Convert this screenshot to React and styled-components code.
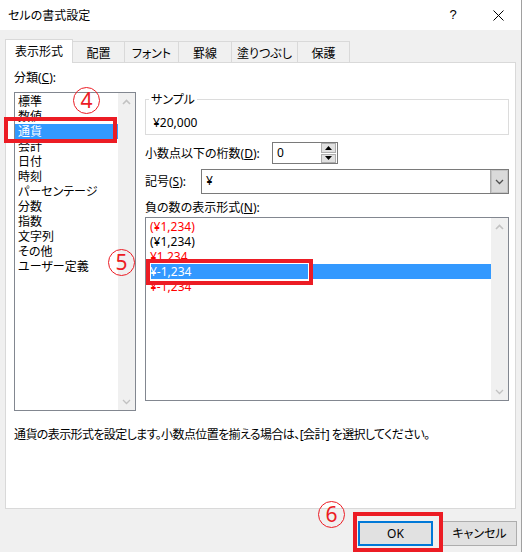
import React from 'react';
import styled, { createGlobalStyle } from 'styled-components';

const Global = createGlobalStyle`
  html, body { margin: 0; padding: 0; background: #fff; }
  body {
    font-family: "Noto Sans", "Noto Sans CJK JP", sans-serif;
    font-size: 12px;
    color: #000;
    font-feature-settings: "palt";
  }
  * { box-sizing: border-box; }
`;

const RED = '#ec1c24';

const Window = styled.div`
  position: relative;
  width: 522px;
  height: 552px;
  background: #f0f0f0;
  border-right: 1px solid #a0a0a0;
  display: flex;
  flex-direction: column;
  overflow: hidden;
`;

const TitleBar = styled.div`
  height: 30px;
  flex: none;
  background: #fff;
  display: flex;
  align-items: center;
  padding-left: 8px;
`;

const Title = styled.div`
  flex: 1;
  font-size: 12px;
  line-height: 16px;
  padding-top: 1px;
`;

const HelpButton = styled.div`
  width: 14px;
  text-align: center;
  font-size: 13px;
  line-height: 16px;
  font-family: "Liberation Sans", sans-serif;
`;

const CloseButton = styled.div`
  width: 46px;
  height: 30px;
  margin-left: 15px;
  display: flex;
  align-items: center;
  justify-content: center;
`;

const TabRow = styled.div`
  display: flex;
  align-items: flex-end;
  height: 23px;
  margin: 9px 0 0 5px;
  position: relative;
  z-index: 1;
`;

const Tab = styled.div`
  width: ${p => p.$w}px;
  height: ${p => (p.$active ? 24 : 21)}px;
  margin-bottom: ${p => (p.$active ? -1 : 0)}px;
  margin-left: ${p => (p.$first ? 0 : -1)}px;
  background: ${p => (p.$active ? '#fff' : '#f0f0f0')};
  border: 1px solid #d9d9d9;
  border-bottom: none;
  display: flex;
  align-items: center;
  justify-content: center;
  font-size: 12px;
  line-height: 15px;
  padding-top: ${p => (p.$active ? 0 : 2)}px;
`;

const Panel = styled.div`
  margin-left: 5px;
  width: 511px;
  height: 447px;
  flex: none;
  background: #fff;
  border: 1px solid #d9d9d9;
  display: flex;
  flex-direction: column;
`;

const TopRow = styled.div`
  display: flex;
  padding-left: 8px;
`;

const LeftCol = styled.div`
  width: 122px;
  display: flex;
  flex-direction: column;
`;

const RightCol = styled.div`
  width: 364px;
  margin-left: 9px;
  display: flex;
  flex-direction: column;
`;

const FieldLabel = styled.div`
  line-height: 15px;
  height: 15px;
  margin-top: ${p => p.$mt || 0}px;
  white-space: nowrap;
  u { text-decoration: underline; text-underline-offset: 1px; }
`;

const ListBox = styled.div`
  height: ${p => p.$h}px;
  margin-top: ${p => p.$mt}px;
  border: 1px solid #828790;
  background: #fff;
  display: flex;
`;

const ListItems = styled.div`
  flex: 1;
  padding-top: 1px;
  display: flex;
  flex-direction: column;
`;

const ListItem = styled.div`
  height: 15px;
  line-height: 15px;
  padding-left: ${p => p.$pl}px;
  white-space: nowrap;
  color: ${p => (p.$sel ? '#fff' : p.$red ? '#ff0000' : '#000')};
  background: ${p => (p.$sel ? '#3399ff' : 'transparent')};
`;

const ScrollBar = styled.div`
  width: 17px;
  background: #f0f0f0;
  display: flex;
  flex-direction: column;
  justify-content: space-between;
`;

const ScrollArrow = styled.div`
  height: 17px;
  display: flex;
  align-items: center;
  justify-content: center;
`;

const Group = styled.div`
  margin-top: 36px;
  height: 36px;
  border: 1px solid #dcdcdc;
  padding-left: 7px;
`;

const Legend = styled.div`
  width: fit-content;
  margin-top: -8px;
  margin-left: -4px;
  padding: 0 2px;
  background: #fff;
  line-height: 15px;
`;

const SampleValue = styled.div`
  margin-top: 8px;
  line-height: 15px;
`;

const FormRow = styled.div`
  display: flex;
  align-items: center;
  height: ${p => p.$h}px;
  margin-top: ${p => p.$mt}px;
`;

const RowLabel = styled.div`
  width: ${p => p.$w}px;
  flex: none;
  line-height: 15px;
  white-space: nowrap;
  u { text-decoration: underline; text-underline-offset: 1px; }
`;

const SpinBox = styled.div`
  width: 66px;
  height: 22px;
  border: 1px solid #7a7a7a;
  background: #fff;
  display: flex;
`;

const SpinValue = styled.div`
  flex: 1;
  padding-left: 4px;
  line-height: 19px;
`;

const SpinButtons = styled.div`
  width: 15px;
  margin: 0 1px 0 0;
  display: flex;
  flex-direction: column;
  gap: 1px;
`;

const SpinButton = styled.div`
  flex: 1;
  border: 1px solid #adadad;
  background: #e1e1e1;
  display: flex;
  align-items: center;
  justify-content: center;
`;

const Combo = styled.div`
  flex: 1;
  height: 25px;
  border: 1px solid #7a7a7a;
  background: #fff;
  display: flex;
`;

const ComboValue = styled.div`
  flex: 1;
  padding-left: 4px;
  line-height: 22px;
`;

const ComboButton = styled.div`
  width: 18px;
  background: #dadada;
  border-left: 1px solid #adadad;
  box-shadow: inset 0 0 0 1px #c4c4c4;
  display: flex;
  align-items: center;
  justify-content: center;
`;

const Description = styled.div`
  margin-top: 16px;
  padding-left: 8px;
  line-height: 15px;
  white-space: nowrap;
  letter-spacing: -0.6px;
`;

const ButtonRow = styled.div`
  display: flex;
  justify-content: flex-end;
  gap: 9px;
  margin-top: 12px;
  padding-right: 4px;
`;

const Button = styled.div`
  width: 75px;
  height: 25px;
  background: #e1e1e1;
  border: ${p => (p.$default ? '2px solid #0078d7' : '1px solid #adadad')};
  display: flex;
  align-items: center;
  justify-content: center;
  font-size: 12px;
  line-height: 15px;
`;

const RedBox = styled.div`
  position: absolute;
  border: 4px solid ${RED};
  box-shadow: ${p => (p.$inner ? 'inset 0 0 0 1px #fff' : 'none')};
  pointer-events: none;
`;

const Circled = styled.div`
  position: absolute;
  width: 27px;
  height: 27px;
  border: 1.5px solid ${RED};
  border-radius: 50%;
  color: ${RED};
  font-family: "Noto Sans", sans-serif;
  font-size: 21px;
  line-height: 24px;
  text-align: center;
  pointer-events: none;
`;

const ChevronUp = () => (
  <svg width="9" height="6" viewBox="0 0 9 6">
    <polyline points="1,5 4.5,1.5 8,5" fill="none" stroke="#c2c2c2" strokeWidth="1.6" />
  </svg>
);
const ChevronDown = ({ color = '#c2c2c2' }) => (
  <svg width="9" height="6" viewBox="0 0 9 6">
    <polyline points="1,1 4.5,4.5 8,1" fill="none" stroke={color} strokeWidth="1.3" />
  </svg>
);
const TriUp = () => (
  <svg width="7" height="4" viewBox="0 0 7 4"><polygon points="0,4 3.5,0 7,4" fill="#000" /></svg>
);
const TriDown = () => (
  <svg width="7" height="4" viewBox="0 0 7 4"><polygon points="0,0 3.5,4 7,0" fill="#000" /></svg>
);

const Scroll = () => (
  <ScrollBar>
    <ScrollArrow><ChevronUp /></ScrollArrow>
    <ScrollArrow><ChevronDown /></ScrollArrow>
  </ScrollBar>
);

const tabs = [
  { label: '表示形式', w: 68, active: true },
  { label: '配置', w: 53 },
  { label: 'フォント', w: 55 },
  { label: '罫線', w: 54 },
  { label: '塗りつぶし', w: 67 },
  { label: '保護', w: 53 },
];

const categories = ['標準', '数値', '通貨', '会計', '日付', '時刻', 'パーセンテージ', '分数', '指数', '文字列', 'その他', 'ユーザー定義'];

const negatives = [
  { t: '(¥1,234)', red: true },
  { t: '(¥1,234)' },
  { t: '¥1,234', red: true },
  { t: '¥-1,234', sel: true },
  { t: '¥-1,234', red: true },
];

export default function App() {
  return (
    <>
      <Global />
      <Window>
        <TitleBar>
          <Title>セルの書式設定</Title>
          <HelpButton>?</HelpButton>
          <CloseButton>
            <svg width="11" height="11" viewBox="0 0 11 11">
              <path d="M0.5 0.5 L10.5 10.5 M10.5 0.5 L0.5 10.5" stroke="#000" strokeWidth="1" />
            </svg>
          </CloseButton>
        </TitleBar>

        <TabRow>
          {tabs.map((t, i) => (
            <Tab key={t.label} $w={t.w} $active={t.active} $first={i === 0}>{t.label}</Tab>
          ))}
        </TabRow>

        <Panel>
          <TopRow>
            <LeftCol>
              <FieldLabel $mt={7}>分類(<u>C</u>):</FieldLabel>
              <ListBox $h={319} $mt={7}>
                <ListItems>
                  {categories.map(c => (
                    <ListItem key={c} $pl={3} $sel={c === '通貨'}>{c}</ListItem>
                  ))}
                </ListItems>
                <Scroll />
              </ListBox>
            </LeftCol>

            <RightCol>
              <Group>
                <Legend>サンプル</Legend>
                <SampleValue>¥20,000</SampleValue>
              </Group>

              <FormRow $h={22} $mt={7}>
                <RowLabel $w={127}>小数点以下の桁数(<u>D</u>):</RowLabel>
                <SpinBox>
                  <SpinValue>0</SpinValue>
                  <SpinButtons>
                    <SpinButton><TriUp /></SpinButton>
                    <SpinButton><TriDown /></SpinButton>
                  </SpinButtons>
                </SpinBox>
              </FormRow>

              <FormRow $h={25} $mt={5}>
                <RowLabel $w={56}>記号(<u>S</u>):</RowLabel>
                <Combo>
                  <ComboValue>¥</ComboValue>
                  <ComboButton><ChevronDown color="#505050" /></ComboButton>
                </Combo>
              </FormRow>

              <FieldLabel $mt={6}>負の数の表示形式(<u>N</u>):</FieldLabel>
              <ListBox $h={184} $mt={2}>
                <ListItems>
                  {negatives.map((n, i) => (
                    <ListItem key={i} $pl={4} $red={n.red} $sel={n.sel}>{n.t}</ListItem>
                  ))}
                </ListItems>
                <Scroll />
              </ListBox>
            </RightCol>
          </TopRow>

          <Description>通貨の表示形式を設定します。小数点位置を揃える場合は、[会計] を選択してください。</Description>
        </Panel>

        <ButtonRow>
          <Button $default>OK</Button>
          <Button>キャンセル</Button>
        </ButtonRow>

        <RedBox style={{ left: 4, top: 117, width: 113, height: 26 }} />
        <RedBox $inner style={{ left: 146, top: 259, width: 167, height: 26 }} />
        <RedBox style={{ left: 353, top: 512, width: 90, height: 40 }} />
        <Circled style={{ left: 73, top: 87 }}>4</Circled>
        <Circled style={{ left: 108, top: 249 }}>5</Circled>
        <Circled style={{ left: 318, top: 501 }}>6</Circled>
      </Window>
    </>
  );
}
